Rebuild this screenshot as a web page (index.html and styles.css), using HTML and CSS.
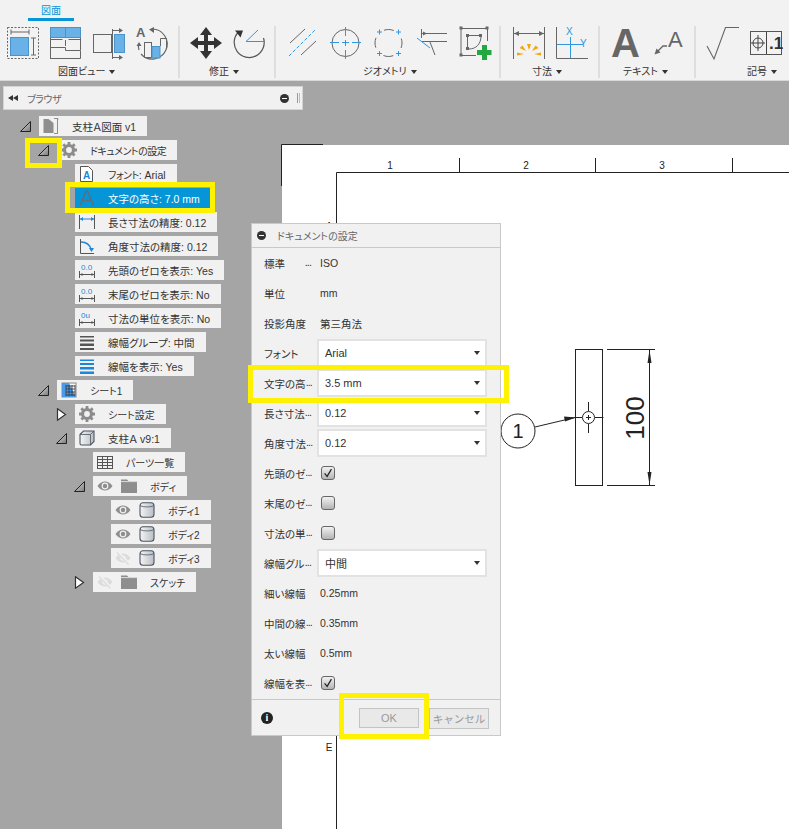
FILE: index.html
```html
<!doctype html>
<html lang="ja">
  <head>
    <meta charset="UTF-8" />
    <title>図面 ドキュメントの設定</title>
    <link rel="stylesheet" href="styles.css">
  </head>
  <body>
    <svg class="defs" width="0" height="0">
      <defs>
        <linearGradient id="twist-fill" x1="0" y1="0" x2="1" y2="1">
          <stop offset="0" stop-color="#e8e8e8" />
          <stop offset="1" stop-color="#777" />
        </linearGradient>
        <linearGradient id="solid-fill" x1="0" y1="0" x2="1" y2="0">
          <stop offset="0" stop-color="#f4f4f4" />
          <stop offset="1" stop-color="#b9bfc6" />
        </linearGradient>
        <symbol id="open" viewBox="0 0 11 13">
          <path d="M.5 11.500 10.500 1.500v10z" fill="url(#twist-fill)" stroke="#222" />
        </symbol>
        <symbol id="closed" viewBox="0 0 11 13">
          <path d="M1.500.8 9.500 6.500l-8 5.700z" fill="#fff" stroke="#333" stroke-width="1.200" />
        </symbol>
        <symbol id="gear" viewBox="0 0 16 16">
          <circle cx="8" cy="8" r="4.500" fill="none" stroke="#8c8c8c" stroke-width="3.200" />
          <path d="M8 0v16M0 8h16M2.300 2.300l11.400 11.400M13.700 2.300 2.300 13.700" stroke="#8c8c8c" stroke-width="2.800" stroke-dasharray="3 10 3" />
        </symbol>
        <symbol id="eye" viewBox="0 0 16 16">
          <path d="M.5 8C3 4.500 5.500 3.500 8 3.500S13 4.500 15.500 8C13 11.500 10.500 12.500 8 12.500S3 11.500.5 8z" fill="#8e8e8e" />
          <circle cx="8" cy="8" r="3.400" fill="#f1f1f1" />
          <circle cx="8" cy="8" r="2.200" fill="#8e8e8e" />
        </symbol>
        <symbol id="eye-off" viewBox="0 0 16 16">
          <path d="M.5 8C3 4.500 5.500 3.500 8 3.500S13 4.500 15.500 8C13 11.500 10.500 12.500 8 12.500S3 11.500.5 8z" fill="#dcdcdc" />
          <circle cx="8" cy="8" r="2.600" fill="#f1f1f1" />
          <path d="M2.500 2 14 14" stroke="#f1f1f1" stroke-width="3" />
          <path d="M2 2.500 13.500 14.500" stroke="#dcdcdc" stroke-width="1.200" />
        </symbol>
        <symbol id="folder" viewBox="0 0 16 16">
          <path d="M0 1.500h6l1.500 1.500H16v12H0z" fill="#8e8e8e" />
          <path d="M0 3.600h16" stroke="#f1f1f1" stroke-width=".8" />
        </symbol>
        <symbol id="solid" viewBox="0 0 16 16">
          <rect x="1" y=".8" width="14" height="14.400" rx="3" fill="url(#solid-fill)" stroke="#4d5560" stroke-width="1.100" />
          <path d="M1.200 3.800c3 1.500 10.600 1.500 13.600 0" fill="none" stroke="#4d5560" stroke-width=".8" />
        </symbol>
        <symbol id="dim" viewBox="0 0 16 16">
          <path d="M.5 9v7M15.500 9v7" stroke="#555" />
          <path d="M1 12.500h14" stroke="#555" />
          <path d="M1 12.500 3.500 11v3zM15 12.500 12.500 11v3z" fill="#555" />
        </symbol>
      </defs>
    </svg>

    <div class="page">
      <header class="ribbon">
        <div class="tab-row"><span class="tab">図面</span></div>
        <div class="panels">
          <section class="panel panel-view">
            <div class="tools">
              <svg class="tool" viewBox="7 27 32 32">
                <rect x="7.500" y="27.500" width="31" height="31" fill="none" stroke="#666" stroke-dasharray="2 1.500" />
                <rect x="10.500" y="37.500" width="18" height="18" fill="#6ab1e7" stroke="#4a93c8" />
                <path d="M11 32h18M11 29.500v5M29 29.500v5M33.500 38v17M31 38h5M31 55h5" fill="none" stroke="#666" />
              </svg>
              <svg class="tool" viewBox="50 27 32 32">
                <rect x="50.500" y="27.500" width="30" height="10" fill="#6ab1e7" stroke="#4a93c8" />
                <path d="M65.500 27.500v10" stroke="#4a93c8" />
                <path d="M50.500 39.500h12M68.500 39.500h12M65.500 40v6M50.500 47.500h15v3h15v8h-30z" fill="none" stroke="#666" />
                <path d="M50.500 38v21M80.500 38v12" stroke="#666" />
              </svg>
              <svg class="tool" viewBox="93 27 32 32">
                <rect x="93.500" y="34.500" width="18" height="18" fill="#f2f2f2" stroke="#666" />
                <rect x="114.500" y="34.500" width="10" height="18" fill="#6ab1e7" stroke="#4a93c8" />
                <path d="M112.500 29v30M112 30.500h8M112 57.500h8" fill="none" stroke="#666" />
                <path d="M123 30.500 119 28v5zM123 57.500 119 55v5z" fill="#666" />
              </svg>
              <svg class="tool" viewBox="136 27 32 32">
                <path d="M152 29a15 15 0 1 1-11 25M139 50a15 15 0 0 1-.5-6" fill="none" stroke="#666" stroke-width="1.200" />
                <path d="M149 29.500 154 27v6zM139 42l-2.500 4h5z" fill="#666" />
                <text class="tool-letter" x="136" y="37" font-size="13">A</text>
                <rect x="144.500" y="42.500" width="7" height="15" fill="#f2f2f2" stroke="#666" />
                <rect x="152" y="46.500" width="8" height="11.500" fill="#6ab1e7" stroke="#4a93c8" />
                <path d="M160.500 46V38.500h6v10" fill="none" stroke="#666" />
              </svg>
            </div>
            <div class="panel-label">図面ビュー<i class="caret"></i></div>
          </section>

          <section class="panel panel-edit">
            <div class="tools">
              <svg class="tool" viewBox="190 27 32 32">
                <path d="M206 27l-6 8h4v6h-6v-4l-8 6 8 6v-4h6v6h-4l6 8 6-8h-4v-6h6v4l8-6-8-6v4h-6v-6h4z" fill="#333" />
              </svg>
              <svg class="tool" viewBox="233 27 32 32">
                <path d="M238.500 32A15 15 0 1 0 263.500 38" fill="none" stroke="#555" stroke-width="1.200" />
                <path d="M235 30.500h8l-2.500 7z" fill="#333" />
                <path d="M258 30 246 41.500h18" fill="none" stroke="#2e97e0" />
              </svg>
            </div>
            <div class="panel-label">修正<i class="caret"></i></div>
          </section>

          <section class="panel panel-geometry">
            <div class="tools">
              <svg class="tool" viewBox="288 27 32 32">
                <path d="M290 43l15-14M301 55l15-14" stroke="#666" fill="none" />
                <path d="M289 56l27-27" stroke="#2e97e0" stroke-dasharray="3.500 2" fill="none" />
              </svg>
              <svg class="tool" viewBox="331 27 32 32">
                <circle cx="345.500" cy="43" r="13.500" fill="none" stroke="#666" />
                <path d="M345.500 27v9M345.500 40v6M345.500 50v9M330 42.500h9M342 42.500h7M352 42.500h9" stroke="#2e97e0" />
              </svg>
              <svg class="tool" viewBox="374 27 32 32">
                <circle cx="388.500" cy="43" r="13.500" fill="none" stroke="#666" stroke-dasharray="10 11.200" stroke-dashoffset="5" />
                <path d="M379.500 29.500v5M377 32h5M398.500 29.500v5M396 32h5M379.500 51v5M377 53.500h5M398.500 51v5M396 53.500h5" stroke="#2e97e0" />
              </svg>
              <svg class="tool" viewBox="417 27 32 32">
                <path d="M421.500 29v9M422 33.500h25M422 41.500h25M430 42l5 13" fill="none" stroke="#666" />
                <path d="M427 33.500l-4-2v4z" fill="#666" />
                <path d="M417 38l13 10" stroke="#2e97e0" />
              </svg>
              <svg class="tool" viewBox="460 27 32 32">
                <path d="M462 28.500h25M461 29v26M487.500 29v12M462 55.500h14M468 35.500h12M467.500 36v12M481 36c0 8-5 13-12 13" fill="none" stroke="#666" />
                <path d="M459.500 26.500h3v3h-3zM485.500 26.500h3v3h-3zM459.500 53.500h3v3h-3zM466 34h3v3h-3zM479 34h3v3h-3zM466 47h3v3h-3z" fill="#666" />
                <path d="M482 45h5v5h4.500v5H487v5h-5v-5h-5v-5h5z" fill="#22a83f" />
              </svg>
            </div>
            <div class="panel-label">ジオメトリ<i class="caret"></i></div>
          </section>

          <section class="panel panel-dim">
            <div class="tools">
              <svg class="tool" viewBox="513 27 32 32">
                <path d="M513.500 27v32M544.500 27v32M514 33.500h30" fill="none" stroke="#666" />
                <path d="M514 33.500l5-2.500v5zM544 33.500l-5-2.500v5z" fill="#666" />
                <path d="M517 52.500v3l7-1.500zM519.500 48l3-2.500 3.500 5.500zM527 44h4l-2 6zM538.500 48l-3-2.500-3.500 5.500zM541 52.500v3l-7-1.500z" fill="#f5a60a" />
              </svg>
              <svg class="tool" viewBox="556 27 32 32">
                <path d="M556.500 27v31.500H588" fill="none" stroke="#666" />
                <path d="M570.500 37v21M557 44.500h26" stroke="#2e97e0" />
                <text class="tool-axis" x="566" y="35" font-size="10">X</text>
                <text class="tool-axis" x="580" y="47" font-size="10">Y</text>
              </svg>
            </div>
            <div class="panel-label">寸法<i class="caret"></i></div>
          </section>

          <section class="panel panel-text">
            <div class="tools">
              <svg class="tool" viewBox="612 27 32 32">
                <text class="tool-letter" x="611" y="57" font-size="40">A</text>
              </svg>
              <svg class="tool" viewBox="655 27 32 32">
                <text class="tool-thin" x="668" y="47" font-size="22">A</text>
                <path d="M667 46h-4l-6 6" fill="none" stroke="#666" stroke-width="1.300" />
                <path d="M654.500 54.500l2-6 4 4z" fill="#666" />
              </svg>
            </div>
            <div class="panel-label">テキスト<i class="caret"></i></div>
          </section>

          <section class="panel panel-symbol">
            <div class="tools">
              <svg class="tool" viewBox="706 27 32 32">
                <path d="M707 46l7 13 11.500-31.500H739" fill="none" stroke="#666" stroke-width="1.100" />
              </svg>
              <svg class="tool" viewBox="749 27 32 32">
                <rect x="750.500" y="31.500" width="31" height="23" fill="none" stroke="#555" />
                <path d="M766.500 32v22M758 35v16M751 43h14" stroke="#444" />
                <circle cx="758" cy="43" r="5" fill="none" stroke="#444" />
                <text class="tool-dot" x="769" y="49" font-size="17">.1</text>
              </svg>
            </div>
            <div class="panel-label">記号<i class="caret"></i></div>
          </section>
        </div>
      </header>

      <main class="workspace">
        <div class="browser-bar">
          <svg class="rewind" viewBox="0 0 10 6"><path d="M0 3l5-3v6zM5 3l5-3v6z" fill="#333" /></svg>
          <span class="browser-title">ブラウザ</span>
          <span class="minus"></span>
          <span class="grip"></span>
        </div>

        <ul class="tree">
          <li>
            <div class="row">
              <svg class="twist"><use href="#open" /></svg>
              <div class="node">
                <svg class="ico" viewBox="0 0 16 16">
                  <path d="M.5 1h5l5 4v10h-10z" fill="#8e8e8e" />
                  <path d="M11 .5h4v1M14.500 1v14M11 15.500h4" fill="none" stroke="#8e8e8e" />
                </svg>
                <span class="label">支柱Ａ図面 v1</span>
              </div>
            </div>
            <ul>
              <li>
                <div class="row">
                  <svg class="twist"><use href="#open" /></svg>
                  <div class="node">
                    <svg class="ico"><use href="#gear" /></svg>
                    <span class="label label-kana label-tight">ドキュメントの設定</span>
                  </div>
                </div>
                <ul>
                  <li>
                    <div class="row">
                      <span class="twist"></span>
                      <div class="node">
                        <svg class="ico" viewBox="0 0 16 16">
                          <path d="M1.500.5h8l4 4v11h-12z" fill="#fff" stroke="#555" />
                          <text class="ico-letter" x="4" y="13" font-size="10">A</text>
                        </svg>
                        <span class="label"><span class="kana">フォント</span>: Arial</span>
                      </div>
                    </div>
                  </li>
                  <li>
                    <div class="row">
                      <span class="twist"></span>
                      <div class="node node-selected">
                        <svg class="ico" viewBox="0 0 16 16">
                          <path d="M1 15.500 7 1h1.500l6 14.500M3.500 10.500h8" fill="none" stroke="#5c6e7a" stroke-width="1.400" />
                        </svg>
                        <span class="label">文字の高さ: 7.0 mm</span>
                      </div>
                    </div>
                  </li>
                  <li>
                    <div class="row">
                      <span class="twist"></span>
                      <div class="node">
                        <svg class="ico" viewBox="0 0 16 16">
                          <path d="M.5 1v14M15.500 1v14" stroke="#555" />
                          <path d="M1 5h14" stroke="#1b87d8" />
                          <path d="M1 5l3-2v4zM15 5l-3-2v4z" fill="#1b87d8" />
                        </svg>
                        <span class="label">長さ寸法の精度: 0.12</span>
                      </div>
                    </div>
                  </li>
                  <li>
                    <div class="row">
                      <span class="twist"></span>
                      <div class="node">
                        <svg class="ico" viewBox="0 0 16 16">
                          <path d="M1.500 1v14.500H15" fill="none" stroke="#555" />
                          <path d="M2 4c5 0 9 3 10.500 8" fill="none" stroke="#1b87d8" stroke-width="1.300" />
                          <path d="M12.500 14l-2.500-4h5z" fill="#1b87d8" />
                        </svg>
                        <span class="label">角度寸法の精度: 0.12</span>
                      </div>
                    </div>
                  </li>
                  <li>
                    <div class="row">
                      <span class="twist"></span>
                      <div class="node">
                        <svg class="ico" viewBox="0 0 16 16">
                          <use href="#dim" />
                          <text class="ico-num" x="2" y="8" font-size="8">0.0</text>
                        </svg>
                        <span class="label">先頭のゼロを表示: Yes</span>
                      </div>
                    </div>
                  </li>
                  <li>
                    <div class="row">
                      <span class="twist"></span>
                      <div class="node">
                        <svg class="ico" viewBox="0 0 16 16">
                          <use href="#dim" />
                          <text class="ico-num" x="2" y="8" font-size="8">0.0</text>
                        </svg>
                        <span class="label">末尾のゼロを表示: No</span>
                      </div>
                    </div>
                  </li>
                  <li>
                    <div class="row">
                      <span class="twist"></span>
                      <div class="node">
                        <svg class="ico" viewBox="0 0 16 16">
                          <use href="#dim" />
                          <text class="ico-num" x="2" y="8" font-size="8">0u</text>
                        </svg>
                        <span class="label">寸法の単位を表示: No</span>
                      </div>
                    </div>
                  </li>
                  <li>
                    <div class="row">
                      <span class="twist"></span>
                      <div class="node">
                        <svg class="ico" viewBox="0 0 16 16">
                          <path d="M1 2h14v1.500H1zM1 5.500h14v2H1zM1 9.500h14v2.500H1z" fill="#555" />
                          <path d="M1 14h14v2H1z" fill="#555" />
                        </svg>
                        <span class="label">線幅グループ: 中間</span>
                      </div>
                    </div>
                  </li>
                  <li>
                    <div class="row">
                      <span class="twist"></span>
                      <div class="node">
                        <svg class="ico" viewBox="0 0 16 16">
                          <path d="M1 1.500h14v1.500H1zM1 5h14v2H1zM1 9h14v2.500H1z" fill="#1b87d8" />
                          <path d="M1 13.500h14V16H1z" fill="#1b87d8" />
                        </svg>
                        <span class="label">線幅を表示: Yes</span>
                      </div>
                    </div>
                  </li>
                </ul>
              </li>
              <li>
                <div class="row">
                  <svg class="twist"><use href="#open" /></svg>
                  <div class="node">
                    <svg class="ico" viewBox="0 0 16 16">
                      <rect x="1" y="1" width="14" height="14" fill="#f8f8f8" stroke="#888" />
                      <path d="M1 1h7l7 14H1z" fill="#4c9be8" />
                      <path d="M5 4h9M5 7h9M5 10h9M5 13h9M5 3v11M8 3v11M11 3v11M14 3v11" stroke="#333" stroke-width=".8" />
                    </svg>
                    <span class="label label-kana">シート1</span>
                  </div>
                </div>
                <ul>
                  <li>
                    <div class="row">
                      <svg class="twist"><use href="#closed" /></svg>
                      <div class="node">
                        <svg class="ico"><use href="#gear" /></svg>
                        <span class="label label-kana">シート設定</span>
                      </div>
                    </div>
                  </li>
                  <li>
                    <div class="row">
                      <svg class="twist"><use href="#open" /></svg>
                      <div class="node">
                        <svg class="ico" viewBox="0 0 16 16">
                          <path d="M1 4.500 4.500 1H15v10.500L11.500 15H2.500Q1 15 1 13.500z" fill="url(#solid-fill)" stroke="#4d5560" stroke-width="1.100" />
                          <path d="M1 4.500h10.500V15M11.500 4.500 15 1" fill="none" stroke="#4d5560" stroke-width=".8" />
                        </svg>
                        <span class="label">支柱Ａ v9:1</span>
                      </div>
                    </div>
                    <ul>
                      <li>
                        <div class="row">
                          <span class="twist"></span>
                          <div class="node">
                            <svg class="ico" viewBox="0 0 16 16">
                              <rect x=".5" y="2.500" width="15" height="12" fill="none" stroke="#555" />
                              <path d="M.5 5.500h15M.5 8.500h15M.5 11.500h15M5.500 3v11M10.500 3v11" stroke="#555" />
                            </svg>
                            <span class="label label-kana">パーツ一覧</span>
                          </div>
                        </div>
                      </li>
                      <li>
                        <div class="row">
                          <svg class="twist"><use href="#open" /></svg>
                          <div class="node">
                            <svg class="ico"><use href="#eye" /></svg>
                            <svg class="ico"><use href="#folder" /></svg>
                            <span class="label label-kana">ボディ</span>
                          </div>
                        </div>
                        <ul>
                          <li>
                            <div class="row">
                              <span class="twist"></span>
                              <div class="node">
                                <svg class="ico"><use href="#eye" /></svg>
                                <svg class="ico"><use href="#solid" /></svg>
                                <span class="label label-kana">ボディ1</span>
                              </div>
                            </div>
                          </li>
                          <li>
                            <div class="row">
                              <span class="twist"></span>
                              <div class="node">
                                <svg class="ico"><use href="#eye" /></svg>
                                <svg class="ico"><use href="#solid" /></svg>
                                <span class="label label-kana">ボディ2</span>
                              </div>
                            </div>
                          </li>
                          <li>
                            <div class="row">
                              <span class="twist"></span>
                              <div class="node">
                                <svg class="ico"><use href="#eye-off" /></svg>
                                <svg class="ico"><use href="#solid" /></svg>
                                <span class="label label-kana">ボディ3</span>
                              </div>
                            </div>
                          </li>
                        </ul>
                      </li>
                      <li>
                        <div class="row">
                          <svg class="twist"><use href="#closed" /></svg>
                          <div class="node">
                            <svg class="ico"><use href="#eye-off" /></svg>
                            <svg class="ico"><use href="#folder" /></svg>
                            <span class="label label-kana">スケッチ</span>
                          </div>
                        </div>
                      </li>
                    </ul>
                  </li>
                </ul>
              </li>
            </ul>
          </li>
        </ul>
      </main>

      <!-- drawing sheet, numbers are page coordinates -->
      <svg class="sheet" viewBox="281 144 508 685">
        <rect x="282" y="145" width="507" height="684" fill="#fff" />
        <path d="M281.500 186V144.500H323" fill="none" stroke="#222" />
        <path d="M336.500 829V172.500H789" fill="none" stroke="#222" />
        <path d="M459.500 158v14M595.500 158v14M732.500 158v14" stroke="#222" />
        <text class="sheet-zone" x="390" y="169" text-anchor="middle">1</text>
        <text class="sheet-zone" x="526" y="169" text-anchor="middle">2</text>
        <text class="sheet-zone" x="662" y="169" text-anchor="middle">3</text>
        <text class="sheet-zone" x="329" y="230" text-anchor="middle">A</text>
        <text class="sheet-zone" x="329" y="751" text-anchor="middle">E</text>

        <rect x="575.500" y="349.500" width="27" height="136" fill="none" stroke="#222" />
        <path d="M607 349.500h48M607 485.500h48M649.500 350v135" fill="none" stroke="#222" />
        <path d="M649.500 350l-2 13h4zM649.500 485l-2-13h4z" fill="#222" />
        <text class="sheet-dim" transform="translate(644 418) rotate(-90)" text-anchor="middle">100</text>

        <circle cx="518" cy="431" r="17" fill="#fff" stroke="#222" />
        <text class="sheet-balloon" x="518" y="438" text-anchor="middle">1</text>
        <path d="M535 427 575 417.500" stroke="#222" />
        <path d="M576 417.500 564 416.500l1 5z" fill="#222" />
        <path d="M588.500 402v9M588.500 424v9M575 417.500h7M595 417.500h8.500M586 417.500h5M588.500 415v5" stroke="#222" />
        <circle cx="588.500" cy="417.500" r="6" fill="none" stroke="#222" />
      </svg>

      <div class="dialog">
        <div class="dialog-title">
          <span class="minus"></span>
          <span>ドキュメントの設定</span>
        </div>
        <div class="dialog-body">
          <div class="field"><span class="field-name">標準<em>...</em></span><span class="field-value">ISO</span></div>
          <div class="field"><span class="field-name">単位</span><span class="field-value">mm</span></div>
          <div class="field"><span class="field-name">投影角度</span><span class="field-value">第三角法</span></div>
          <div class="field"><span class="field-name">フォント</span><div class="select">Arial<i class="caret"></i></div></div>
          <div class="field"><span class="field-name">文字の高<em>...</em></span><div class="select">3.5 mm<i class="caret"></i></div></div>
          <div class="field"><span class="field-name">長さ寸法<em>...</em></span><div class="select">0.12<i class="caret"></i></div></div>
          <div class="field"><span class="field-name">角度寸法<em>...</em></span><div class="select">0.12<i class="caret"></i></div></div>
          <div class="field">
            <span class="field-name">先頭のゼ<em>...</em></span>
            <span class="check"><svg viewBox="0 0 14 14"><path d="M3 7.500 6 11 11 2.500" fill="none" stroke="#222" stroke-width="1.400" /></svg></span>
          </div>
          <div class="field"><span class="field-name">末尾のゼ<em>...</em></span><span class="check"></span></div>
          <div class="field"><span class="field-name">寸法の単<em>...</em></span><span class="check"></span></div>
          <div class="field"><span class="field-name">線幅グル<em>...</em></span><div class="select">中間<i class="caret"></i></div></div>
          <div class="field"><span class="field-name">細い線幅</span><span class="field-value">0.25mm</span></div>
          <div class="field"><span class="field-name">中間の線<em>...</em></span><span class="field-value">0.35mm</span></div>
          <div class="field"><span class="field-name">太い線幅</span><span class="field-value">0.5mm</span></div>
          <div class="field">
            <span class="field-name">線幅を表<em>...</em></span>
            <span class="check"><svg viewBox="0 0 14 14"><path d="M3 7.500 6 11 11 2.500" fill="none" stroke="#222" stroke-width="1.400" /></svg></span>
          </div>
        </div>
        <div class="dialog-foot">
          <span class="info">i</span>
          <button class="btn btn-ok">OK</button>
          <button class="btn btn-cancel">キャンセル</button>
        </div>
      </div>

      <div class="mark mark-twist"></div>
      <div class="mark mark-height"></div>
      <div class="mark mark-field"></div>
      <div class="mark mark-ok"></div>
    </div>
  </body>
</html>
```

FILE: styles.css
```css
* {
  box-sizing: border-box;
}

body {
  margin: 0;
  font-family: "Liberation Sans", "Noto Sans CJK JP", sans-serif;
  font-size: 10px;
  font-feature-settings: "palt";
  color: #333;
}

.defs {
  position: absolute;
}

.page {
  position: relative;
  width: 789px;
  height: 829px;
  overflow: hidden;
  background: #a5a5a5;
}

/* ribbon */

.ribbon {
  height: 81px;
  background: #f2f2f2;
  border-bottom: 1px solid #d8d8d8;
}

.tab-row {
  height: 26px;
  padding-left: 28px;
}

.tab {
  display: block;
  width: 46px;
  height: 21px;
  padding-top: 4px;
  border-bottom: 3px solid #0696d7;
  text-align: center;
  line-height: 14px;
  color: #0696d7;
}

.panels {
  display: flex;
  height: 52px;
}

.panel {
  padding-top: 1px;
  border-right: 2px solid #dedede;
}

.panel:last-child {
  border-right: none;
}

.tools {
  display: flex;
  gap: 11px;
}

.tool {
  display: block;
  width: 32px;
  height: 32px;
  overflow: visible;
}

.tool-letter {
  font-family: "Liberation Sans", sans-serif;
  font-weight: bold;
  fill: #666;
}

.tool-thin {
  font-family: "Liberation Sans", sans-serif;
  fill: #666;
}

.tool-axis {
  font-family: "Liberation Sans", sans-serif;
  fill: #2e97e0;
}

.tool-dot {
  font-family: "Liberation Sans", sans-serif;
  font-weight: bold;
  fill: #333;
}

.panel-label {
  margin-top: 6px;
  line-height: 14px;
  white-space: nowrap;
}

.panel-view {
  width: 180px;
  padding-left: 7px;
}

.panel-view .panel-label {
  margin-left: 51px;
}

.panel-edit {
  width: 96px;
  padding-left: 10px;
}

.panel-edit .panel-label {
  margin-left: 19px;
}

.panel-geometry {
  width: 225px;
  padding-left: 12px;
}

.panel-geometry .panel-label {
  margin-left: 75px;
}

.panel-dim {
  width: 99px;
  padding-left: 12px;
}

.panel-dim .panel-label {
  margin-left: 19px;
}

.panel-text {
  width: 96px;
  padding-left: 12px;
}

.panel-text .panel-label {
  margin-left: 11px;
}

.panel-symbol {
  width: 93px;
  padding-left: 10px;
}

.panel-symbol .panel-label {
  margin-left: 41px;
}

.caret {
  display: inline-block;
  margin-left: 4px;
  border-left: 3px solid transparent;
  border-right: 3px solid transparent;
  border-top: 4px solid #333;
  vertical-align: 1px;
}

/* browser */

.workspace {
  padding: 5px 0 0 3px;
}

.browser-bar {
  display: flex;
  align-items: center;
  width: 300px;
  height: 24px;
  padding: 0 2px 0 4px;
  background: #f1f1f1;
  border: 1px solid #d4d4d4;
  color: #666;
}

.rewind {
  width: 10px;
  height: 6px;
  margin-right: 9px;
}

.browser-title {
  flex: 1;
  letter-spacing: -.5px;
}

.minus {
  position: relative;
  display: block;
  flex: none;
  width: 9px;
  height: 9px;
  border-radius: 50%;
  background: #333;
}

.minus::after {
  content: "";
  position: absolute;
  left: 2px;
  top: 4px;
  width: 5px;
  height: 1px;
  background: #fff;
}

.grip {
  width: 3px;
  height: 10px;
  margin-left: 8px;
  border-left: 1px solid #999;
  border-right: 1px solid #bbb;
}

.tree,
.tree ul {
  list-style: none;
  margin: 0;
  padding: 0;
}

.tree {
  padding-top: 2px;
  padding-left: 17px;
}

.tree ul {
  padding-left: 18px;
}

.row {
  display: flex;
  align-items: center;
  height: 20px;
  margin-top: 4px;
}

.twist {
  display: block;
  flex: none;
  width: 11px;
  height: 13px;
  margin-right: 8px;
}

.node {
  display: flex;
  align-items: center;
  height: 20px;
  padding: 0 11px 0 4px;
  background: #f1f1f1;
}

.node-selected {
  background: #0696d7;
  color: #fff;
}

.ico {
  display: block;
  flex: none;
  width: 16px;
  height: 16px;
  margin-right: 8px;
}

.ico-letter {
  font-family: "Liberation Sans", sans-serif;
  fill: #1b87d8;
  font-weight: bold;
}

.ico-num {
  font-family: "Liberation Sans", sans-serif;
  fill: #1b87d8;
}

.label {
  margin-left: 5px;
  font-size: 10.5px;
  white-space: nowrap;
}

.label-kana {
  font-size: 10px;
}

.label-tight {
  letter-spacing: -.5px;
}

.kana {
  font-size: 10px;
  letter-spacing: -.5px;
}

/* drawing */

.sheet {
  position: absolute;
  left: 281px;
  top: 144px;
  width: 508px;
  height: 685px;
}

.sheet-zone {
  font-family: "Liberation Sans", sans-serif;
  font-size: 10px;
  fill: #222;
}

.sheet-dim {
  font-family: "Liberation Sans", sans-serif;
  font-size: 26px;
  fill: #222;
}

.sheet-balloon {
  font-family: "Liberation Sans", sans-serif;
  font-size: 20px;
  fill: #222;
}

/* dialog */

.dialog {
  position: absolute;
  left: 251px;
  top: 223px;
  width: 250px;
  height: 513px;
  background: #f1f1f1;
  border: 1px solid #c9c9c9;
  font-size: 10.5px;
}

.dialog-title {
  display: flex;
  align-items: center;
  gap: 11px;
  height: 24px;
  padding-left: 5px;
  border-bottom: 1px solid #c9c9c9;
  color: #666;
  font-size: 10px;
}

.field {
  display: flex;
  align-items: center;
  height: 30px;
  padding-left: 12px;
}

.field-name {
  display: flex;
  flex: none;
  width: 53px;
  padding-right: 6px;
  white-space: nowrap;
}

.field-name em {
  margin-left: auto;
  font-style: normal;
  letter-spacing: -.8px;
}

.field-value {
  padding-left: 3px;
}

.select {
  display: flex;
  align-items: center;
  justify-content: space-between;
  width: 170px;
  height: 28px;
  padding: 0 5px 0 6px;
  background: #fff;
  border: 2px solid #e2e2e2;
  font-size: 11px;
}

.select .caret {
  margin-left: 0;
  vertical-align: 0;
}

.check {
  display: block;
  width: 14px;
  height: 14px;
  margin-left: 4px;
  border: 1px solid #666;
  border-radius: 3px;
  background: linear-gradient(#f2f2f2, #b4b4b4);
}

.check svg {
  display: block;
  width: 12px;
  height: 12px;
}

.dialog-foot {
  display: flex;
  align-items: center;
  height: 37px;
  margin-top: 1px;
  padding: 0 11px 0 9px;
  border-top: 1px solid #c9c9c9;
}

.info {
  flex: none;
  width: 12px;
  height: 12px;
  border-radius: 50%;
  background: #222;
  color: #fff;
  text-align: center;
  font: bold 10px/12px "Liberation Serif", serif;
}

.btn {
  height: 20px;
  padding: 0;
  font-family: inherit;
  background: #e9e9e9;
  border: 1px solid #c4c4c4;
  color: #999;
}

.btn-ok {
  width: 60px;
  margin-left: 86px;
  font-size: 11px;
}

.btn-cancel {
  width: 60px;
  height: 21px;
  margin-left: 10px;
  font-size: 10.5px;
}

/* yellow callouts on top of the screenshot */

.mark {
  position: absolute;
  border: 5px solid #fff200;
}

.mark-twist {
  left: 25px;
  top: 138px;
  width: 37px;
  height: 30px;
}

.mark-height {
  left: 65px;
  top: 182px;
  width: 150px;
  height: 31px;
}

.mark-field {
  left: 248px;
  top: 365px;
  width: 261px;
  height: 38px;
}

.mark-ok {
  left: 339px;
  top: 693px;
  width: 90px;
  height: 46px;
}
```
